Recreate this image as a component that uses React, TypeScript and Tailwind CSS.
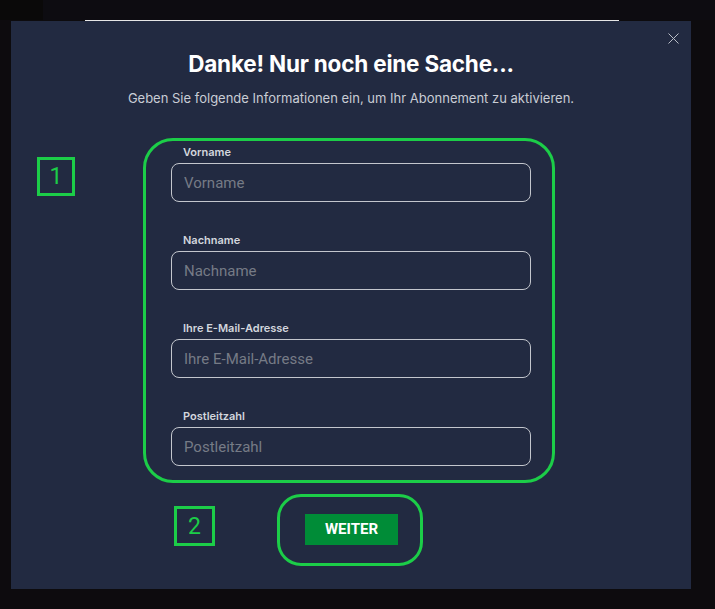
import React from 'react';

const fields = ['Vorname', 'Nachname', 'Ihre E-Mail-Adresse', 'Postleitzahl'];

const Marker = ({ label, className }: { label: string; className: string }) => (
  <div
    className={`flex shrink-0 items-center justify-center border-[3px] border-[#1ccd48] text-[#1ccd48] text-[23px] leading-none font-['Roboto',sans-serif] ${className}`}
  >
    {label}
  </div>
);

const App = () => {
  return (
    <div className="w-[715px] h-[609px] overflow-hidden bg-[#0d0b0e] font-['Inter',sans-serif]">
      <div className="flex h-[20px] bg-[#0d0c11]">
        <div className="w-[43px] bg-[#0a0909]" />
      </div>
      <div className="ml-[85px] h-px w-[534px] bg-[#e6e6e6]" />
      <div className="relative ml-[11px] h-[568px] w-[680px] bg-[#222a41]">
        <button className="absolute right-[12px] top-[12px] text-[#b9bdc6]">
          <svg width="11" height="11" viewBox="0 0 11 11" fill="none" stroke="currentColor" strokeWidth="1">
            <path d="M0.5 0.5l10 10M10.5 0.5l-10 10" />
          </svg>
        </button>

        <h1 className="pt-[29px] text-center text-[22.5px] leading-[28px] font-bold tracking-[-0.2px] text-white">
          Danke! Nur noch eine Sache...
        </h1>
        <p className="mt-[12px] text-center text-[13px] leading-[16px] text-[#c9cdd5]">
          Geben Sie folgende Informationen ein, um Ihr Abonnement zu aktivieren.
        </p>

        <div className="mt-[32px] flex items-start">
          <Marker label="1" className="ml-[26px] mt-[19px] h-[39px] w-[38px]" />
          <form className="ml-[68px] w-[412px] rounded-[30px] border-[3px] border-[#1ccd48] pb-[14px] pl-[25px] pr-[21px] pt-[4px]">
            <div className="flex flex-col gap-[31px]">
              {fields.map((f) => (
                <label key={f} className="flex flex-col gap-[4px]">
                  <span className="pl-[12px] text-[11px] leading-[14px] font-semibold text-[#d3d6dd]">{f}</span>
                  <input
                    placeholder={f}
                    className="h-[39px] w-[360px] rounded-[8px] border border-[#c3c6cd] bg-transparent px-[12px] font-['Roboto',sans-serif] text-[15px] text-white outline-none placeholder:text-[#767b86]"
                  />
                </label>
              ))}
            </div>
          </form>
        </div>

        <div className="mt-[11px] flex items-start">
          <Marker label="2" className="ml-[163px] mt-[12px] h-[40px] w-[41px]" />
          <div className="ml-[62px] h-[72px] w-[146px] rounded-[24px] border-[3px] border-[#1ccd48] pl-[25px] pt-[17px]">
            <button className="h-[31px] w-[93px] bg-[#008c37] font-['Roboto',sans-serif] text-[15px] font-bold text-white">
              WEITER
            </button>
          </div>
        </div>
      </div>
    </div>
  );
};

export default App;
